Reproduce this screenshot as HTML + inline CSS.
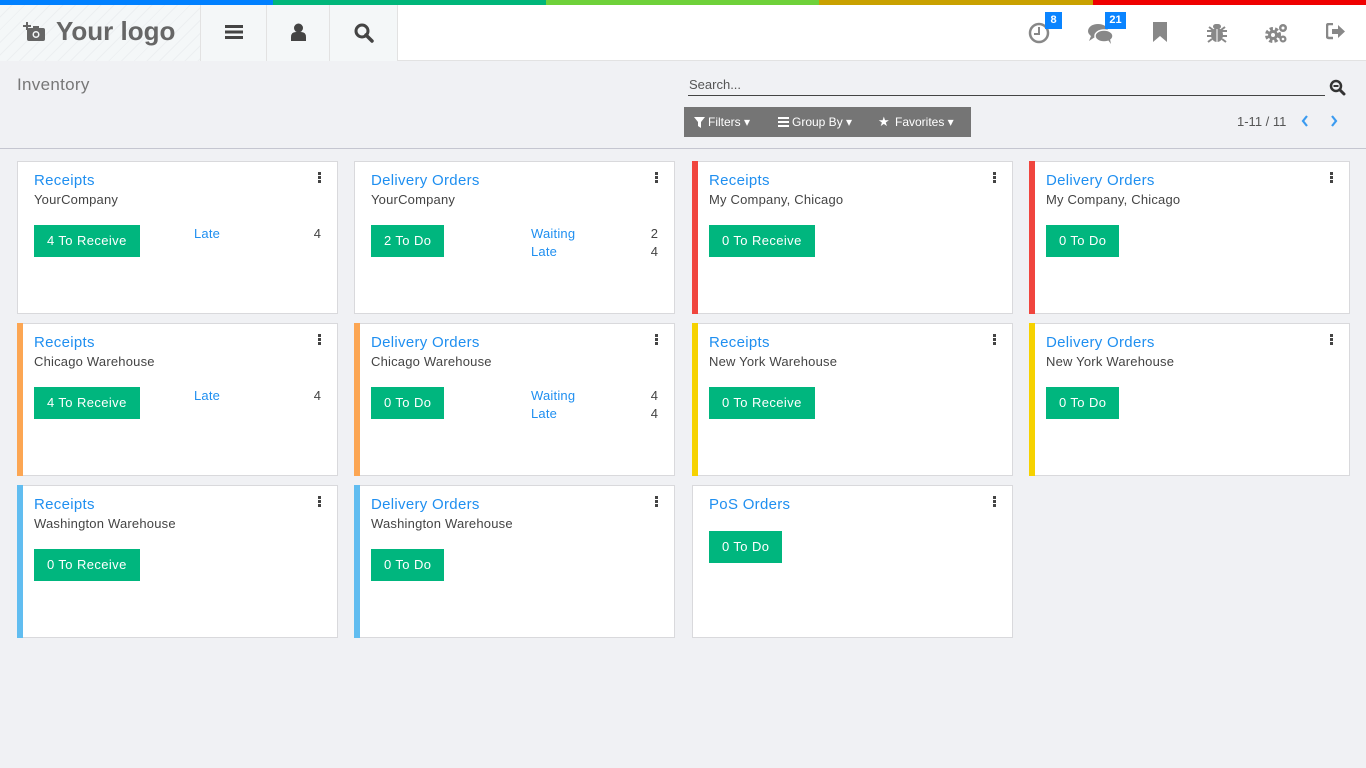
<!DOCTYPE html>
<html><head><meta charset="utf-8"><style>
*{box-sizing:border-box;margin:0;padding:0}
body{width:1366px;height:768px;background:#f0f1f4;font-family:"Liberation Sans",sans-serif;position:relative;overflow:hidden;color:#4c4c4c}
.strip{position:absolute;top:0;height:5px}
.hdr{position:absolute;top:5px;left:0;width:1366px;height:56px;background:#fff;border-bottom:1px solid #e2e2e2}
.left{position:absolute;left:0;top:0;width:397px;height:56px;background:#f4f7f8;border-right:1px solid #e2e2e2}
.sep{position:absolute;top:0;width:1px;height:56px;background:#e2e2e2}
.ic{position:absolute}
.badge{position:absolute;background:#0a84ff;color:#fff;font-size:11px;font-weight:bold;text-align:center;height:17px;line-height:17px}
.cp{position:absolute;top:62px;left:0;width:1366px;height:87px;border-bottom:1px solid #c5c6d0}
.card{position:absolute;width:321px;height:153px;background:#fff;border:1px solid #d9d9dc}
.bar{position:absolute;left:-1px;top:-1px;bottom:-1px;width:6px}
.t{position:absolute;left:16px;top:10px;font-size:15px;color:#1f8ff0;letter-spacing:.3px}
.s{position:absolute;left:16px;top:30px;font-size:13px;color:#444;letter-spacing:.2px}
.btn{position:absolute;left:16px;top:63px;height:32px;line-height:32px;padding:0 13px;background:#00b67e;color:#fff;font-size:13px;letter-spacing:.4px}
.lbl{position:absolute;left:176px;font-size:13px;color:#1f8ff0;letter-spacing:.2px}
.val{position:absolute;right:16px;font-size:13px;color:#444}
.dots{position:absolute;right:16px;top:10px;width:3px}
.dots i{display:block;width:3px;height:3px;background:#444;margin-bottom:1px}
</style></head><body>
<div class="strip" style="left:0;width:273px;background:#0080ff"></div>
<div class="strip" style="left:273px;width:273px;background:#00b67a"></div>
<div class="strip" style="left:546px;width:273px;background:#6fd13a"></div>
<div class="strip" style="left:819px;width:274px;background:#c9a100"></div>
<div class="strip" style="left:1093px;width:273px;background:#ef0000"></div>
<div class="hdr">
 <div class="left" style="background:repeating-linear-gradient(135deg,#f4f7f8 0 8px,#eceff1 8px 9px)"></div>
 <div style="position:absolute;left:200px;top:0;width:197px;height:56px;background:#f4f7f8"></div>
 <div class="sep" style="left:200px"></div><div class="sep" style="left:266px"></div><div class="sep" style="left:329px"></div><div class="sep" style="left:397px"></div>
 <svg class="ic" style="left:23px;top:17px" width="22" height="20" viewBox="0 0 22 20"><path d="M3 0v3H0v2h3v3h2V5h3V3H5V0z" fill="#666"/><rect x="4" y="6" width="18" height="13" rx="2" fill="#666"/><rect x="10" y="4" width="6" height="3" fill="#666"/><circle cx="13" cy="12.5" r="3.5" fill="#f4f7f8"/><circle cx="13" cy="12.5" r="2" fill="#666"/></svg>
 <div style="position:absolute;left:56px;top:11px;font-size:26px;font-weight:bold;color:#666">Your logo</div>
 <svg class="ic" style="left:225px;top:20px" width="18" height="14"><rect y="0" width="18" height="3" fill="#444"/><rect y="5.5" width="18" height="3" fill="#444"/><rect y="11" width="18" height="3" fill="#444"/></svg>
 <svg class="ic" style="left:291px;top:18px" width="15" height="18"><circle cx="7.5" cy="5" r="4.5" fill="#444"/><path d="M0 18v-4q0-5 5-5h5q5 0 5 5v4z" fill="#444"/></svg>
 <svg class="ic" style="left:354px;top:18px" width="20" height="20"><circle cx="8" cy="8" r="6" fill="none" stroke="#444" stroke-width="3"/><path d="M12 12l6 6" stroke="#444" stroke-width="3.5" stroke-linecap="round"/></svg>
 <svg class="ic" style="left:1028px;top:17px" width="22" height="22"><circle cx="11" cy="11" r="9" fill="none" stroke="#888" stroke-width="2.5"/><path d="M11 5v7h-5" fill="none" stroke="#888" stroke-width="2"/></svg>
 <div class="badge" style="left:1045px;top:7px;width:17px">8</div>
 <svg class="ic" style="left:1088px;top:18px" width="26" height="22"><ellipse cx="10" cy="8" rx="10" ry="7" fill="#888"/><path d="M3 13l-2 5 6-4z" fill="#888"/><ellipse cx="16" cy="13" rx="9" ry="6" fill="#888" stroke="#fff" stroke-width="1.5"/><path d="M20 17l3 4-1-5z" fill="#888"/></svg>
 <div class="badge" style="left:1105px;top:7px;width:21px">21</div>
 <svg class="ic" style="left:1152px;top:17px" width="16" height="20"><path d="M1 0h14v20l-7-6-7 6z" fill="#888"/></svg>
 <svg class="ic" style="left:1207px;top:17px" width="20" height="22"><ellipse cx="10" cy="13" rx="6" ry="7" fill="#888"/><rect x="6" y="2" width="8" height="5" rx="3" fill="#888"/><path d="M0 9h20M0 14h20M1 20l4-3M19 20l-4-3M2 5l4 3M18 5l-4 3" stroke="#888" stroke-width="2"/><path d="M10 7v13" stroke="#fff" stroke-width="1"/></svg>
 <svg class="ic" style="left:1265px;top:17px" width="24" height="22"><circle cx="8" cy="13" r="6" fill="none" stroke="#888" stroke-width="4" stroke-dasharray="3 2"/><circle cx="8" cy="13" r="5" fill="#888"/><circle cx="8" cy="13" r="2" fill="#fff"/><circle cx="18" cy="6" r="4" fill="#888"/><circle cx="18" cy="6" r="1.5" fill="#fff"/><circle cx="18" cy="17" r="3.5" fill="#888"/><circle cx="18" cy="17" r="1.3" fill="#fff"/></svg>
 <svg class="ic" style="left:1326px;top:18px" width="20" height="17"><path d="M7 1H3Q1 1 1 3v10q0 2 2 2h4" fill="none" stroke="#888" stroke-width="2.5"/><path d="M6 6h6V2l7 6.5-7 6.5v-4H6z" fill="#888"/></svg>
</div>
<div class="cp">
 <div style="position:absolute;left:17px;top:13px;font-size:17px;color:#777;letter-spacing:.3px">Inventory</div>
 <div style="position:absolute;left:688px;top:15px;width:637px;height:19px;border-bottom:1px solid #444;font-size:13px;color:#555;padding-left:1px">Search...</div>
 <svg class="ic" style="left:1329px;top:17px" width="17" height="17"><circle cx="7" cy="7" r="5" fill="none" stroke="#333" stroke-width="2.5"/><path d="M4.5 7h5" stroke="#333" stroke-width="2"/><path d="M11 11l4 4" stroke="#333" stroke-width="3" stroke-linecap="round"/></svg>
 <div style="position:absolute;left:684px;top:45px;width:287px;height:30px;background:#757575;color:#fff;font-size:12px;line-height:30px">
  <svg style="position:absolute;left:10px;top:10px" width="11" height="11"><path d="M0 0h11L7 5v6L4 9V5z" fill="#fff"/></svg>
  <span style="position:absolute;left:24px">Filters &#9662;</span>
  <svg style="position:absolute;left:94px;top:10px" width="11" height="10"><path d="M0 1h11M0 5h11M0 9h11" stroke="#fff" stroke-width="2"/></svg>
  <span style="position:absolute;left:108px">Group By &#9662;</span>
  <span style="position:absolute;left:194px;font-size:13px">&#9733;</span>
  <span style="position:absolute;left:211px">Favorites &#9662;</span>
 </div>
 <div style="position:absolute;left:1237px;top:52px;font-size:13px;color:#555">1-11 / 11</div>
 <svg class="ic" style="left:1301px;top:53px" width="8" height="12"><path d="M6 1L2 6l4 5" fill="none" stroke="#3b9bf0" stroke-width="2.2"/></svg>
 <svg class="ic" style="left:1330px;top:53px" width="8" height="12"><path d="M2 1l4 5-4 5" fill="none" stroke="#3b9bf0" stroke-width="2.2"/></svg>
</div>

<div class="card" style="left:17px;top:161px"><div class="t">Receipts</div><div class="s">YourCompany</div><div class="btn">4 To Receive</div><div class="lbl" style="top:64px">Late</div><div class="val" style="top:64px">4</div><div class="dots"><i></i><i></i><i></i></div></div>
<div class="card" style="left:354px;top:161px"><div class="t">Delivery Orders</div><div class="s">YourCompany</div><div class="btn">2 To Do</div><div class="lbl" style="top:64px">Waiting</div><div class="val" style="top:64px">2</div><div class="lbl" style="top:82px">Late</div><div class="val" style="top:82px">4</div><div class="dots"><i></i><i></i><i></i></div></div>
<div class="card" style="left:692px;top:161px"><div class="bar" style="background:#f0453e"></div><div class="t">Receipts</div><div class="s">My Company, Chicago</div><div class="btn">0 To Receive</div><div class="dots"><i></i><i></i><i></i></div></div>
<div class="card" style="left:1029px;top:161px"><div class="bar" style="background:#f0453e"></div><div class="t">Delivery Orders</div><div class="s">My Company, Chicago</div><div class="btn">0 To Do</div><div class="dots"><i></i><i></i><i></i></div></div>

<div class="card" style="left:17px;top:323px"><div class="bar" style="background:#fca653"></div><div class="t">Receipts</div><div class="s">Chicago Warehouse</div><div class="btn">4 To Receive</div><div class="lbl" style="top:64px">Late</div><div class="val" style="top:64px">4</div><div class="dots"><i></i><i></i><i></i></div></div>
<div class="card" style="left:354px;top:323px"><div class="bar" style="background:#fca653"></div><div class="t">Delivery Orders</div><div class="s">Chicago Warehouse</div><div class="btn">0 To Do</div><div class="lbl" style="top:64px">Waiting</div><div class="val" style="top:64px">4</div><div class="lbl" style="top:82px">Late</div><div class="val" style="top:82px">4</div><div class="dots"><i></i><i></i><i></i></div></div>
<div class="card" style="left:692px;top:323px"><div class="bar" style="background:#f6d200"></div><div class="t">Receipts</div><div class="s">New York Warehouse</div><div class="btn">0 To Receive</div><div class="dots"><i></i><i></i><i></i></div></div>
<div class="card" style="left:1029px;top:323px"><div class="bar" style="background:#f6d200"></div><div class="t">Delivery Orders</div><div class="s">New York Warehouse</div><div class="btn">0 To Do</div><div class="dots"><i></i><i></i><i></i></div></div>

<div class="card" style="left:17px;top:485px"><div class="bar" style="background:#61bdf0"></div><div class="t">Receipts</div><div class="s">Washington Warehouse</div><div class="btn">0 To Receive</div><div class="dots"><i></i><i></i><i></i></div></div>
<div class="card" style="left:354px;top:485px"><div class="bar" style="background:#61bdf0"></div><div class="t">Delivery Orders</div><div class="s">Washington Warehouse</div><div class="btn">0 To Do</div><div class="dots"><i></i><i></i><i></i></div></div>
<div class="card" style="left:692px;top:485px"><div class="t">PoS Orders</div><div class="btn" style="top:45px">0 To Do</div><div class="dots"><i></i><i></i><i></i></div></div>
</body></html>
